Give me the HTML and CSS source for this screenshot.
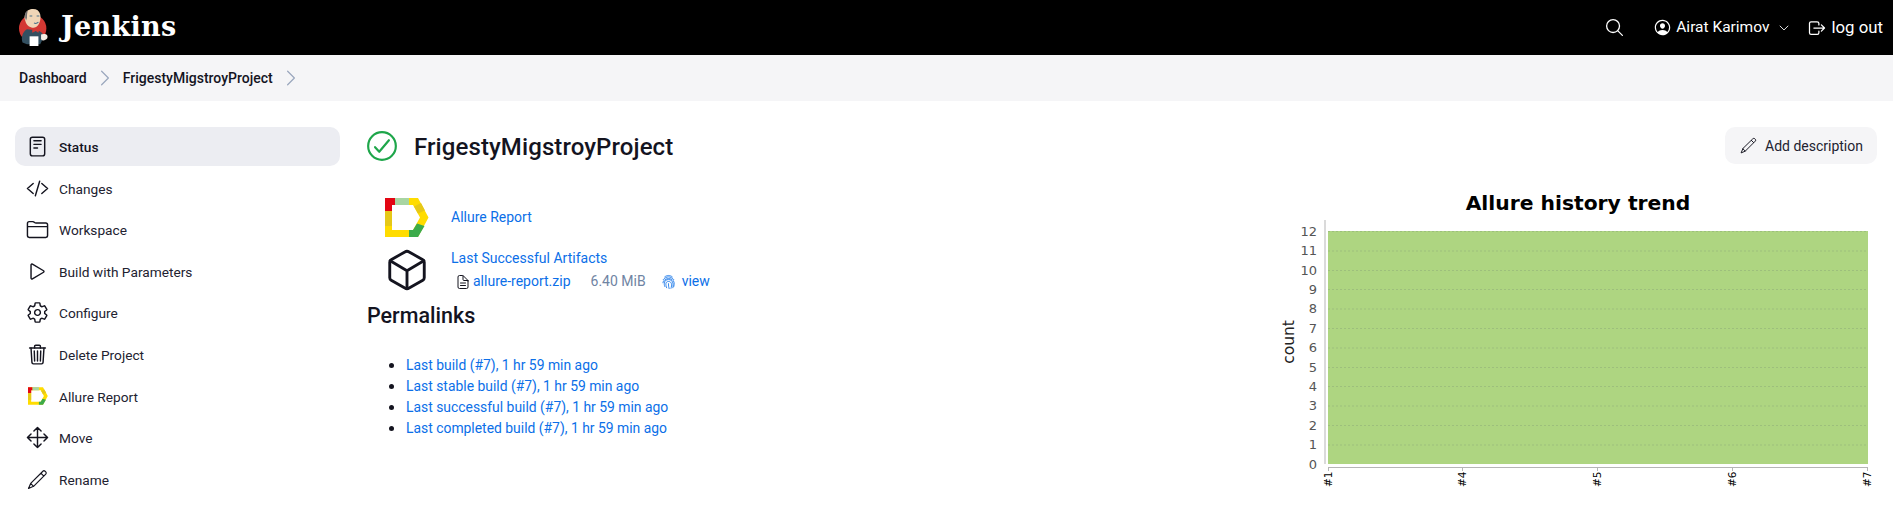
FILE: index.html
```html
<!DOCTYPE html>
<html lang="en">
<head>
<meta charset="utf-8">
<title>FrigestyMigstroyProject - Jenkins</title>
<link rel="stylesheet" href="styles.css">
</head>
<body>
<header class="topbar">
  <a class="brand">
    <svg class="butler" viewBox="0 0 34 42">
      <circle cx="15.5" cy="22" r="15.5" fill="#d33833"/>
      <path d="M4 38c-2-6 0-12 5-15l11 1c5 1 8 4 8 8l-4 8H9z" fill="#335061"/>
      <path d="M7 6c1-4 5-6 9-6s7 2 8 6c1 4 0 9-2 12-2 3-5 4-8 3-4-1-6-4-7-8-1-2-1-5 0-7z" fill="#f0d6b7"/>
      <path d="M7 6c0-2 1-3 3-4-1 3-1 6-1 8l-1 3-1-3z" fill="#6d6b6d"/>
      <path d="M15 23l8-1-1 5-3-2-4 2z" fill="#d33833"/>
      <path d="M12 8h3M20 8h3M17 16c2 1 3 1 5-1" stroke="#49728b" stroke-width="1.2" fill="none"/>
      <path d="M12 31h10v11H12z" fill="#fff"/>
      <path d="M25 29c2-1 6-1 7 1s0 4-2 5-4 1-5-1z" fill="#f5efe6"/>
    </svg>
    <span class="wordmark">Jenkins</span>
  </a>
  <nav class="topnav">
    <svg class="ic ic-search stroke-w" viewBox="0 0 512 512"><path d="M221.09 64a157.09 157.09 0 10157.09 157.09A157.1 157.1 0 00221.09 64z"/><path d="M338.29 338.29L448 448"/></svg>
    <a class="topnav-user">
      <svg class="ic ic-user" viewBox="0 0 512 512"><path d="M258.9 48C141.92 46.42 46.42 141.92 48 258.9c1.56 112.19 92.91 203.54 205.1 205.1 116.99 1.6 212.48-93.9 210.88-210.88C462.44 140.91 371.09 49.56 258.9 48zm126.42 327.25a4 4 0 01-6.14-.32 124.27 124.27 0 00-32.35-29.59C321.37 329 289.11 320 256 320s-65.37 9-90.83 25.34a124.24 124.24 0 00-32.35 29.58 4 4 0 01-6.14.32A175.32 175.32 0 0180 259c-1.63-97.31 78.22-178.76 175.57-179S432 158.81 432 256a175.32 175.32 0 01-46.68 119.25z"/><path d="M256 144c-19.72 0-37.55 7.39-50.22 20.82s-19 32-17.57 51.93C191.11 256 221.52 288 256 288s64.83-32 67.79-71.24c1.48-19.74-4.8-38.14-17.68-51.82C293.39 151.44 275.59 144 256 144z"/></svg>
      <span>Airat Karimov</span>
      <svg class="ic ic-caret stroke-w" viewBox="0 0 512 512"><path d="M112 184l144 144 144-144"/></svg>
    </a>
    <a class="topnav-logout">
      <svg class="ic ic-logout stroke-w" viewBox="0 0 512 512"><path d="M304 336v40a40 40 0 01-40 40H104a40 40 0 01-40-40V136a40 40 0 0140-40h152c22.09 0 48 17.91 48 40v40M368 336l80-80-80-80M176 256h256"/></svg>
      <span>log out</span>
    </a>
  </nav>
</header>

<div class="crumbs">
  <a>Dashboard</a>
  <svg class="crumb-sep" viewBox="0 0 512 512"><path d="M184 112l144 144-144 144"/></svg>
  <a>FrigestyMigstroyProject</a>
  <svg class="crumb-sep" viewBox="0 0 512 512"><path d="M184 112l144 144-144 144"/></svg>
</div>

<main class="page">
  <aside class="side">
    <a class="side-item is-active"><svg class="side-ic stroke-d" viewBox="0 0 512 512"><rect x="96" y="48" width="320" height="416" rx="48"/><path d="M176 128h160M176 208h160M176 288h80"/></svg><span>Status</span></a>
    <a class="side-item"><svg class="side-ic stroke-d" viewBox="0 0 512 512"><path d="M160 368L32 256l128-112M352 368l128-112-128-112M304 96l-96 320"/></svg><span>Changes</span></a>
    <a class="side-item"><svg class="side-ic stroke-d" viewBox="0 0 512 512"><path d="M440 432H72a40 40 0 01-40-40V120a40 40 0 0140-40h75.89a40 40 0 0122.19 6.72l27.84 18.56a40 40 0 0022.19 6.72H440a40 40 0 0140 40v240a40 40 0 01-40 40zM32 192h448"/></svg><span>Workspace</span></a>
    <a class="side-item"><svg class="side-ic stroke-d" viewBox="0 0 512 512"><path d="M112 111v290c0 17.44 17 28.52 31 20.16l247.9-148.37c12.12-7.25 12.12-26.33 0-33.58L143 90.84c-14-8.36-31 2.72-31 20.16z"/></svg><span>Build with Parameters</span></a>
    <a class="side-item"><svg class="side-ic stroke-d" viewBox="0 0 512 512"><path d="M262.29 192.31a64 64 0 1057.4 57.4 64.13 64.13 0 00-57.4-57.4zM416.39 256a154.34 154.34 0 01-1.53 20.79l45.21 35.46a10.81 10.81 0 012.45 13.75l-42.77 74a10.81 10.81 0 01-13.14 4.59l-44.9-18.08a16.11 16.11 0 00-15.17 1.75A164.48 164.48 0 01325 400.8a15.94 15.94 0 00-8.82 12.14l-6.73 47.89a11.08 11.08 0 01-10.68 9.17h-85.54a11.11 11.11 0 01-10.69-8.87l-6.72-47.82a16.07 16.07 0 00-9-12.22 155.3 155.3 0 01-21.46-12.57 16 16 0 00-15.11-1.71l-44.89 18.07a10.81 10.81 0 01-13.14-4.58l-42.77-74a10.8 10.8 0 012.45-13.75l38.21-30a16.05 16.05 0 006-14.08c-.36-4.17-.58-8.33-.58-12.5s.21-8.27.58-12.35a16 16 0 00-6.07-13.94l-38.19-30A10.81 10.81 0 0149.48 186l42.77-74a10.81 10.81 0 0113.14-4.59l44.9 18.08a16.11 16.11 0 0015.17-1.75A164.48 164.48 0 01187 111.2a15.94 15.94 0 008.82-12.14l6.73-47.89A11.08 11.08 0 01213.23 42h85.54a11.11 11.11 0 0110.69 8.87l6.72 47.82a16.07 16.07 0 009 12.22 155.3 155.3 0 0121.46 12.57 16 16 0 0015.11 1.71l44.89-18.07a10.81 10.81 0 0113.14 4.58l42.77 74a10.8 10.8 0 01-2.45 13.75l-38.21 30a16.05 16.05 0 00-6.05 14.08c.33 4.14.55 8.3.55 12.47z"/></svg><span>Configure</span></a>
    <a class="side-item"><svg class="side-ic stroke-d" viewBox="0 0 512 512"><path d="M112 112l20 320c.95 18.49 14.4 32 32 32h184c17.67 0 30.87-13.51 32-32l20-320"/><path d="M80 112h352"/><path d="M192 112V72a23.93 23.93 0 0124-24h80a23.93 23.93 0 0124 24v40M256 176v224M184 176l8 224M328 176l-8 224"/></svg><span>Delete Project</span></a>
    <a class="side-item"><svg class="side-ic-allure" viewBox="0 0 44 39"><path fill="#ffdc00" fill-rule="evenodd" d="M0 0H33L43.5 19.5 33 39H0ZM7 7V32H28L35 19.5 28 7Z"/><path fill="#e30613" d="M0 0H10V7H7V13H0Z"/><path fill="#a8d5a2" d="M10 0H24V7H10Z"/><path fill="#e6c818" d="M0 13H7V28H0Z"/><path fill="#e6c818" d="M36 5L40 12.500 33 15.500 29 8.500Z"/><path fill="#3cab4b" d="M24 32H28L32 25.500 39.500 28 33 39H24Z"/></svg><span>Allure Report</span></a>
    <a class="side-item"><svg class="side-ic stroke-d" viewBox="0 0 512 512"><path d="M176 112l80-80 80 80M256 32v448M176 400l80 80 80-80M400 176l80 80-80 80M112 176l-80 80 80 80M32 256h448"/></svg><span>Move</span></a>
    <a class="side-item"><svg class="side-ic stroke-d pencil" viewBox="0 0 512 512"><path d="M376 72a34 34 0 0148 0l16 16a34 34 0 010 48L168 408 56 456l48-112zM332 116l64 64M104 344l64 64"/></svg><span>Rename</span></a>
  </aside>

  <section class="content">
    <div class="title-row">
      <svg class="status-ok" viewBox="48 48 416 416"><path d="M448 256c0-106-86-192-192-192S64 150 64 256s86 192 192 192 192-86 192-192z"/><path d="M352 176L217.6 336 160 272"/></svg>
      <h1 class="title">FrigestyMigstroyProject</h1>
      <a class="add-desc"><svg class="add-ic stroke-d pencil" viewBox="0 0 512 512"><path d="M376 72a34 34 0 0148 0l16 16a34 34 0 010 48L168 408 56 456l48-112zM332 116l64 64M104 344l64 64"/></svg><span>Add description</span></a>
    </div>

    <div class="body">
      <div class="main-col">
        <div class="action-row action-allure">
          <svg class="allure-lg" viewBox="0 0 44 39"><path fill="#ffdc00" fill-rule="evenodd" d="M0 0H33L43.5 19.5 33 39H0ZM7 7V32H28L35 19.5 28 7Z"/><path fill="#e30613" d="M0 0H10V7H7V13H0Z"/><path fill="#a8d5a2" d="M10 0H24V7H10Z"/><path fill="#e6c818" d="M0 13H7V28H0Z"/><path fill="#e6c818" d="M36 5L40 12.500 33 15.500 29 8.500Z"/><path fill="#3cab4b" d="M24 32H28L32 25.500 39.500 28 33 39H24Z"/></svg>
          <a class="link">Allure Report</a>
        </div>
        <div class="action-row action-artifacts">
          <svg class="cube" viewBox="0 0 512 512"><path d="M448 341.37V170.61A32 32 0 00432.11 143l-152-88.46a47.94 47.94 0 00-48.24 0L79.89 143A32 32 0 0064 170.61v170.76A32 32 0 0079.89 369l152 88.46a48 48 0 0048.24 0l152-88.46A32 32 0 00448 341.37z"/><path d="M69 153.99l187 110 187-110M256 463.99v-200"/></svg>
          <div class="artifacts">
            <a class="link">Last Successful Artifacts</a>
            <div class="artifact">
              <svg class="file-ic" viewBox="0 0 512 512"><path d="M416 221.25V416a48 48 0 01-48 48H144a48 48 0 01-48-48V96a48 48 0 0148-48h98.75a32 32 0 0122.62 9.37l141.26 141.26a32 32 0 019.37 22.62z"/><path d="M256 56v120a32 32 0 0032 32h120M176 288h160M176 368h160"/></svg>
              <a class="link">allure-report.zip</a>
              <span class="size">6.40 MiB</span>
              <svg class="print" viewBox="0 0 24 24"><path d="M6 4.5c4-3 8-3 12 0M3.5 9c5-6 12-6 17 0M3 14c1-9 17-9 18 0 .2 2 0 4-.5 6M6 20c-2-5-1-11 6-11s8 6 7 13M9 22c-2-5-2-10 3-10s6 5 4 11M12 15.5c0 3 0 5 1 8"/></svg>
              <a class="link">view</a>
            </div>
          </div>
        </div>
        <h2 class="heading">Permalinks</h2>
        <ul class="permalinks">
          <li><a class="link">Last build (#7), 1 hr 59 min ago</a></li>
          <li><a class="link">Last stable build (#7), 1 hr 59 min ago</a></li>
          <li><a class="link">Last successful build (#7), 1 hr 59 min ago</a></li>
          <li><a class="link">Last completed build (#7), 1 hr 59 min ago</a></li>
        </ul>
      </div>

      <svg class="chart" viewBox="0 0 633 320" width="633" height="320">
        <text class="chart-title" x="318" y="25">Allure history trend</text>
        <rect class="plot" x="68" y="46" width="540" height="233"/>
        <g class="gridlines">
          <path d="M68 46.5H608M68 66H608M68 85.5H608M68 104.5H608M68 124H608M68 143.5H608M68 163H608M68 182.5H608M68 201.5H608M68 221H608M68 240.5H608M68 260H608"/>
        </g>
        <path class="axis" d="M65 35V279M68 282.5H608M68.5 282V286M202.5 282V286M337.5 282V286M472.5 282V286M607.5 282V286"/>
        <g class="y-ticks">
          <text x="57" y="51">12</text><text x="57" y="70">11</text><text x="57" y="90">10</text><text x="57" y="109">9</text><text x="57" y="128">8</text><text x="57" y="148">7</text><text x="57" y="167">6</text><text x="57" y="187">5</text><text x="57" y="206">4</text><text x="57" y="225">3</text><text x="57" y="245">2</text><text x="57" y="264">1</text><text x="57" y="284">0</text>
        </g>
        <text class="y-label" transform="translate(34 157) rotate(-90)">count</text>
        <g class="x-ticks">
          <text transform="translate(72 302) rotate(-90)">#1</text>
          <text transform="translate(206 302) rotate(-90)">#4</text>
          <text transform="translate(341 302) rotate(-90)">#5</text>
          <text transform="translate(476 302) rotate(-90)">#6</text>
          <text transform="translate(611 302) rotate(-90)">#7</text>
        </g>
      </svg>
    </div>
  </section>
</main>
</body>
</html>
```
FILE: styles.css
```css
* { box-sizing: border-box; }
html, body { height: 100%; }
body {
  margin: 0;
  overflow: hidden;
  background: #fff;
  color: #14141f;
  font-family: Roboto, "Noto Sans", sans-serif;
  font-size: 14px;
  line-height: 21px;
}
a { color: inherit; text-decoration: none; }

.ic { display: block; }
.stroke-w { fill: none; stroke: #fff; stroke-width: 32; stroke-linecap: round; stroke-linejoin: round; }
.stroke-d { fill: none; stroke: #14141f; stroke-width: 32; stroke-linecap: round; stroke-linejoin: round; }
.pencil { stroke-width: 26; }

.topbar {
  height: 55px;
  background: #000;
  color: #fff;
  display: flex;
  align-items: center;
  justify-content: space-between;
  padding: 0 10px 0 19px;
}
.brand { display: flex; align-items: center; gap: 12px; }
.butler { width: 30px; height: 39px; display: block; }
.wordmark {
  font-family: "DejaVu Serif", "Liberation Serif", serif;
  font-weight: 700;
  font-size: 27px;
  line-height: 1;
  letter-spacing: 0.3px;
  margin-top: -2px;
}
.topnav { display: flex; align-items: center; font-size: 15.5px; }
.ic-search { width: 21px; height: 21px; margin-right: 28px; }
.topnav-user { display: flex; align-items: center; gap: 4px; }
.ic-user { width: 19px; height: 19px; fill: #fff; }
.ic-caret { width: 14px; height: 14px; margin-left: 4px; }
.topnav-logout { display: flex; align-items: center; gap: 4px; margin-left: 16px; font-size: 16.8px; }
.ic-logout { width: 20px; height: 20px; }

.crumbs {
  height: 46px;
  background: #f5f5f7;
  display: flex;
  align-items: center;
  padding-left: 19px;
  font-weight: 500;
}
.crumb-sep {
  width: 24px;
  height: 24px;
  margin: 0 6px;
  fill: none;
  stroke: #9aa7bd;
  stroke-width: 26;
  stroke-linecap: round;
  stroke-linejoin: round;
}

.page { display: flex; align-items: flex-start; }
.side {
  width: 325px;
  flex: none;
  margin: 26px 0 0 15px;
  display: flex;
  flex-direction: column;
  gap: 2.6px;
  font-size: 13.7px;
}
.side-item {
  height: 39px;
  border-radius: 10px;
  display: flex;
  align-items: center;
  gap: 10px;
  padding-left: 11px;
  color: #222230;
}
.side-item span { padding-top: 2px; }
.side-item.is-active { background: #ecedf2; font-weight: 500; color: #14141f; }
.side-ic { width: 23px; height: 23px; flex: none; }
.side-ic-allure { width: 20px; height: 18px; flex: none; margin: 0 1.5px; display: block; }

.content { flex: 1; min-width: 0; margin: 26px 0 0 27px; }
.title-row { display: flex; align-items: center; height: 39px; padding-right: 16px; }
.status-ok {
  width: 30px;
  height: 30px;
  margin-top: -2px;
  fill: none;
  stroke: #1ea64a;
  stroke-width: 30;
  stroke-linecap: round;
  stroke-linejoin: round;
}
.title { margin: 0 0 0 17px; font-size: 24px; line-height: 30px; font-weight: 500; letter-spacing: 0.1px; flex: 1; }
.add-desc {
  height: 37px;
  width: 152px;
  margin-top: -3px;
  border-radius: 10px;
  background: #f5f5f7;
  display: flex;
  align-items: center;
  gap: 7px;
  padding-left: 14px;
  color: #222230;
}
.add-desc span { padding-top: 2px; }
.add-ic { width: 19px; height: 19px; }

.body { display: flex; justify-content: space-between; align-items: flex-start; margin-top: 19px; }
.main-col { flex: 1; min-width: 0; }
.link { color: #0b6fe8; }
.action-row { display: flex; padding-left: 18px; }
.action-allure { align-items: center; margin-top: 12px; height: 40px; }
.allure-lg { width: 44px; height: 39px; margin-right: 22px; display: block; }
.action-artifacts { margin-top: 12px; }
.cube {
  width: 46px;
  height: 46px;
  flex: none;
  margin: -2px 21px 0 -1px;
  fill: none;
  stroke: #14141f;
  stroke-width: 32;
  stroke-linecap: round;
  stroke-linejoin: round;
}
.artifacts { line-height: 23px; margin-top: -2px; }
.artifact { display: flex; align-items: center; padding-left: 4px; }
.file-ic {
  width: 16px;
  height: 16px;
  margin-right: 2px;
  fill: none;
  stroke: #14141f;
  stroke-width: 32;
  stroke-linejoin: round;
  stroke-linecap: round;
}
.size { color: #6f84a3; margin-left: 20px; }
.print {
  width: 15px;
  height: 15px;
  margin: 0 6px 0 15px;
  fill: none;
  stroke: #0b6fe8;
  stroke-width: 1.3;
  stroke-linecap: round;
}
.heading { margin: 9px 0 0; font-size: 21.5px; line-height: 28px; font-weight: 500; }
.permalinks { margin: 24px 0 0; padding: 0 0 0 39px; font-size: 13.9px; }
.permalinks li { height: 21px; }
.permalinks li::marker { font-size: 17px; }

.chart { flex: none; display: block; font-family: "DejaVu Sans", sans-serif; }
.chart-title { font-size: 20.3px; font-weight: 700; text-anchor: middle; fill: #000; }
.plot { fill: #aed581; }
.gridlines path { fill: none; stroke: #9dbf7c; stroke-width: 1; stroke-dasharray: 2 2; }
.axis { fill: none; stroke: #b5b5b5; stroke-width: 1; }
.y-ticks text { font-size: 13px; fill: #555; text-anchor: end; }
.y-label { font-size: 15.5px; fill: #222; text-anchor: middle; }
.x-ticks text { font-size: 10.5px; fill: #000; }
```
